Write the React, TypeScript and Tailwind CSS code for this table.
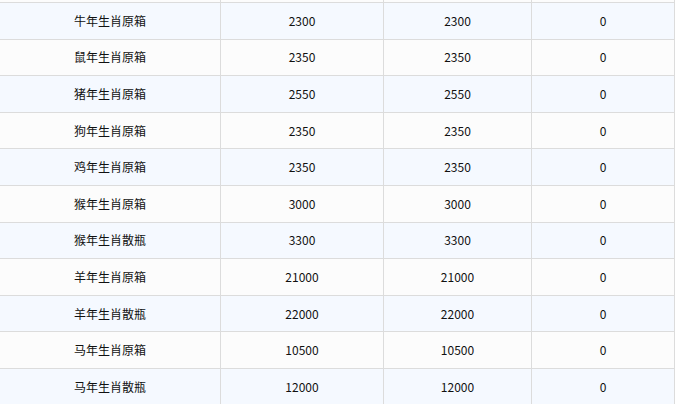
import React from 'react';

const rows = [
  { name: '牛年生肖原箱', a: '2300', b: '2300', c: '0' },
  { name: '鼠年生肖原箱', a: '2350', b: '2350', c: '0' },
  { name: '猪年生肖原箱', a: '2550', b: '2550', c: '0' },
  { name: '狗年生肖原箱', a: '2350', b: '2350', c: '0' },
  { name: '鸡年生肖原箱', a: '2350', b: '2350', c: '0' },
  { name: '猴年生肖原箱', a: '3000', b: '3000', c: '0' },
  { name: '猴年生肖散瓶', a: '3300', b: '3300', c: '0' },
  { name: '羊年生肖原箱', a: '21000', b: '21000', c: '0' },
  { name: '羊年生肖散瓶', a: '22000', b: '22000', c: '0' },
  { name: '马年生肖原箱', a: '10500', b: '10500', c: '0' },
  { name: '马年生肖散瓶', a: '12000', b: '12000', c: '0' },
];

const cell = 'flex items-center justify-center border-r border-[#dcdcdc]';

export default function App() {
  return (
    <div
      className="h-[404px] w-[677px] overflow-hidden bg-white text-[12px] text-[#111]"
      style={{ fontFamily: '"Microsoft YaHei", "Noto Sans CJK SC", sans-serif' }}
    >
      <div className="w-[675px]">
        <div className="grid h-[2px] grid-cols-[221px_163px_148px_143px] bg-[#fcfcfc]">
          <div className="border-r border-[#dcdcdc]" />
          <div className="border-r border-[#dcdcdc]" />
          <div className="border-r border-[#dcdcdc]" />
          <div className="border-r border-[#dcdcdc]" />
        </div>
        {rows.map((r, i) => (
          <div
            key={r.name}
            className={
              'grid h-[36.6px] grid-cols-[221px_163px_148px_143px] border-t border-[#dcdcdc] ' +
              (i % 2 === 0 ? 'bg-[#f5f9ff]' : 'bg-[#fcfcfc]')
            }
          >
            <div className={cell}>{r.name}</div>
            <div className={cell}>{r.a}</div>
            <div className={cell}>{r.b}</div>
            <div className={cell}>{r.c}</div>
          </div>
        ))}
      </div>
    </div>
  );
}
